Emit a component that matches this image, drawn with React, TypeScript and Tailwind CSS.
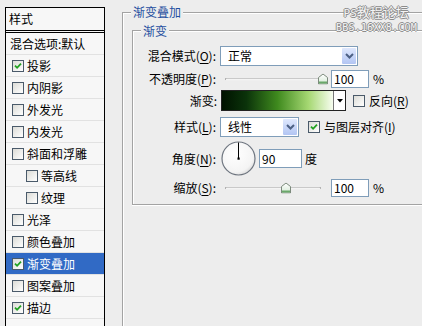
import React from "react";

function Box({ checked }: { checked?: boolean }) {
  return (
    <span className="w-[12px] h-[12px] border border-[#4a5a6a] bg-linear-to-br from-[#dcdcd7] to-white flex items-center justify-center shrink-0">
      {checked && (
        <svg width="8" height="8" viewBox="0 0 8 8">
          <path d="M1 3.6 L3.1 5.8 L7 1.6" stroke="#21a121" strokeWidth="1.8" fill="none" />
        </svg>
      )}
    </span>
  );
}

function SelectBtn() {
  return (
    <div className="w-[16px] h-full bg-linear-to-b from-[#dfe8fd] to-[#b2c5f3] border border-white rounded-[2px] flex items-center justify-center">
      <svg width="9" height="6" viewBox="0 0 9 6">
        <path d="M1 1 L4.5 4.5 L8 1" stroke="#4d6185" strokeWidth="2" fill="none" />
      </svg>
    </div>
  );
}

function Thumb() {
  return (
    <svg width="10" height="11" viewBox="0 0 10 11">
      <defs>
        <linearGradient id="tg" x1="0" y1="0" x2="0" y2="1">
          <stop offset="0" stopColor="#ffffff" />
          <stop offset="1" stopColor="#d6ead6" />
        </linearGradient>
      </defs>
      <polygon points="0.5,4 5,0.5 9.5,4 9.5,10.5 0.5,10.5" fill="url(#tg)" stroke="#7c8a7c" />
      <rect x="1" y="8" width="8" height="2" fill="#6aa86a" />
    </svg>
  );
}

function Slider({ left }: { left: string }) {
  return (
    <div className="relative w-[107px] h-full">
      <div className="absolute left-[4px] w-[96px] top-1/2 h-[3px] border border-[#a5a5a5] border-b-white rounded-full -translate-y-1/2" />
      <div className={`absolute top-1/2 -translate-y-1/2 ${left} flex`}>
        <Thumb />
      </div>
    </div>
  );
}

function Input({ value, className }: { value: string; className: string }) {
  return (
    <div className={`border border-[#7f9db9] bg-white pl-[2px] flex items-center text-[12px] text-black ${className}`}>
      {value}
    </div>
  );
}

const U = ({ c }: { c: string }) => <span className="underline underline-offset-[2px]">{c}</span>;

export default function App() {
  const items: { t: string; checked?: boolean; sel?: boolean; indent?: boolean; plain?: boolean }[] = [
    { t: "混合选项:默认", plain: true },
    { t: "投影", checked: true },
    { t: "内阴影" },
    { t: "外发光" },
    { t: "内发光" },
    { t: "斜面和浮雕" },
    { t: "等高线", indent: true },
    { t: "纹理", indent: true },
    { t: "光泽" },
    { t: "颜色叠加" },
    { t: "渐变叠加", checked: true, sel: true },
    { t: "图案叠加" },
    { t: "描边", checked: true },
  ];

  return (
    <div className="relative w-[422px] h-[326px] bg-[#ededed] flex overflow-hidden font-['Noto_Sans_CJK_SC','Noto_Sans',sans-serif] text-[12px] text-black">
      {/* Left styles list */}
      <div className="mt-[7px] ml-[5px] w-[100px] shrink-0 h-[330px] border border-black border-b-0 bg-[#f7f7f7] flex flex-col">
        <div className="h-[25px] shrink-0 border-b-[3px] border-double border-black pl-[3px] flex items-center leading-none">
          样式
        </div>
        {items.map((it) => (
          <div
            key={it.t}
            className={`h-[22px] shrink-0 border-b border-[#e2e2e2] flex items-center gap-[3px] leading-none ${
              it.sel ? "bg-[#316ac5] text-white" : ""
            } ${it.plain ? "pl-[4px]" : it.indent ? "pl-[20px]" : "pl-[6px]"}`}
          >
            {!it.plain && <Box checked={it.checked} />}
            <span>{it.t}</span>
          </div>
        ))}
        <div className="flex-1" />
      </div>

      {/* Outer group 渐变叠加 */}
      <div className="relative ml-[17px] mt-[12px] w-[320px] h-[330px] shrink-0 border-l border-t border-[#a3a3a3] shadow-[inset_1px_1px_0_#ffffff]">
        <div className="absolute left-[8px] top-[-8px] px-[2px] bg-[#ededed] text-[#1f4fa0] leading-[14px]">渐变叠加</div>

        {/* Inner group 渐变 */}
        <div className="relative ml-[9px] mt-[17px] w-[320px] h-[175px] border-l border-t border-b border-[#a3a3a3] shadow-[inset_1px_1px_0_#ffffff,0_1px_0_#ffffff] pt-[15px] flex flex-col">
          <div className="absolute left-[8px] top-[-7px] px-[2px] bg-[#ededed] text-[#1f4fa0] leading-[14px]">渐变</div>

          {/* row 1 */}
          <div className="h-[20px] flex items-center">
            <div className="w-[83px] text-right">混合模式(<U c="O" />):</div>
            <div className="ml-[4px] w-[138px] h-[20px] border border-[#7f9db9] bg-white flex items-center">
              <span className="flex-1 pl-[7px]">正常</span>
              <SelectBtn />
            </div>
          </div>

          {/* row 2 */}
          <div className="mt-[3px] h-[19px] flex items-center">
            <div className="w-[83px] text-right">不透明度(<U c="P" />):</div>
            <div className="ml-[5px] h-full">
              <Slider left="left-[97px]" />
            </div>
            <Input value="100" className="ml-[3px] w-[38px] h-[18px]" />
            <span className="ml-[4px]">%</span>
          </div>

          {/* row 3 */}
          <div className="mt-[2px] h-[21px] flex items-center">
            <div className="w-[84px] text-right">渐变:</div>
            <div className="ml-[4px] w-[125px] h-[21px] border border-[#222] flex">
              <div className="flex-1 bg-[linear-gradient(to_right,#001200_0%,#0b330a_22%,#3f8a1e_50%,#a6d873_78%,#f7fdf0_100%)]" />
              <div className="w-[12px] bg-white border-l border-[#777] flex items-center justify-center">
                <svg width="6" height="4" viewBox="0 0 6 4">
                  <polygon points="0,0 6,0 3,3.5" fill="#000" />
                </svg>
              </div>
            </div>
            <div className="ml-[7px] flex items-center gap-[4px]">
              <Box />
              <span>反向(<U c="R" />)</span>
            </div>
          </div>

          {/* row 4 */}
          <div className="mt-[6px] h-[20px] flex items-center">
            <div className="w-[83px] text-right">样式(<U c="L" />):</div>
            <div className="ml-[4px] w-[79px] h-[20px] border border-[#7f9db9] bg-white flex items-center">
              <span className="flex-1 pl-[7px]">线性</span>
              <SelectBtn />
            </div>
            <div className="ml-[9px] flex items-center gap-[4px]">
              <Box checked />
              <span>与图层对齐(<U c="I" />)</span>
            </div>
          </div>

          {/* row 5 */}
          <div className="mt-[4px] h-[35px] flex items-center">
            <div className="w-[83px] text-right">角度(<U c="N" />):</div>
            <div className="ml-[5px] w-[35px] h-[35px]">
              <svg width="35" height="35" viewBox="0 0 35 35">
                <defs>
                  <radialGradient id="dg" cx="0.4" cy="0.35" r="0.7">
                    <stop offset="0" stopColor="#ffffff" />
                    <stop offset="0.8" stopColor="#f4f4f4" />
                    <stop offset="1" stopColor="#d8d8d8" />
                  </radialGradient>
                </defs>
                <circle cx="17.5" cy="17.5" r="16.5" fill="url(#dg)" stroke="#6f7680" strokeWidth="1.2" />
                <line x1="17.5" y1="17.5" x2="17.5" y2="1.5" stroke="#000" strokeWidth="1" />
                <rect x="16.5" y="16.5" width="2.2" height="2.2" fill="#000" />
              </svg>
            </div>
            <Input value="90" className="ml-[3px] w-[43px] h-[19px]" />
            <span className="ml-[3px]">度</span>
          </div>

          {/* row 6 */}
          <div className="mt-[3px] h-[18px] flex items-center">
            <div className="w-[83px] text-right">缩放(<U c="S" />):</div>
            <div className="ml-[5px] h-full">
              <Slider left="left-[60px]" />
            </div>
            <Input value="100" className="ml-[3px] w-[38px] h-[18px]" />
            <span className="ml-[4px]">%</span>
          </div>
        </div>
      </div>

      {/* watermark */}
      <div className="absolute left-[336px] top-[5px] flex flex-col items-end text-[#f4f4f4] [text-shadow:1px_0_#8c8c8c,-1px_0_#8c8c8c,0_1px_#8c8c8c,0_-1px_#8c8c8c]">
        <span className="text-[13px] leading-[13px] mr-[8px]">
          <span className="font-['DejaVu_Sans_Mono',monospace] text-[11px]">PS</span>教程论坛
        </span>
        <span className="mt-[2px] leading-[11px] font-['DejaVu_Sans_Mono',monospace] text-[10px] tracking-[0.2px]">BBS.16XX8.COM</span>
      </div>
    </div>
  );
}
